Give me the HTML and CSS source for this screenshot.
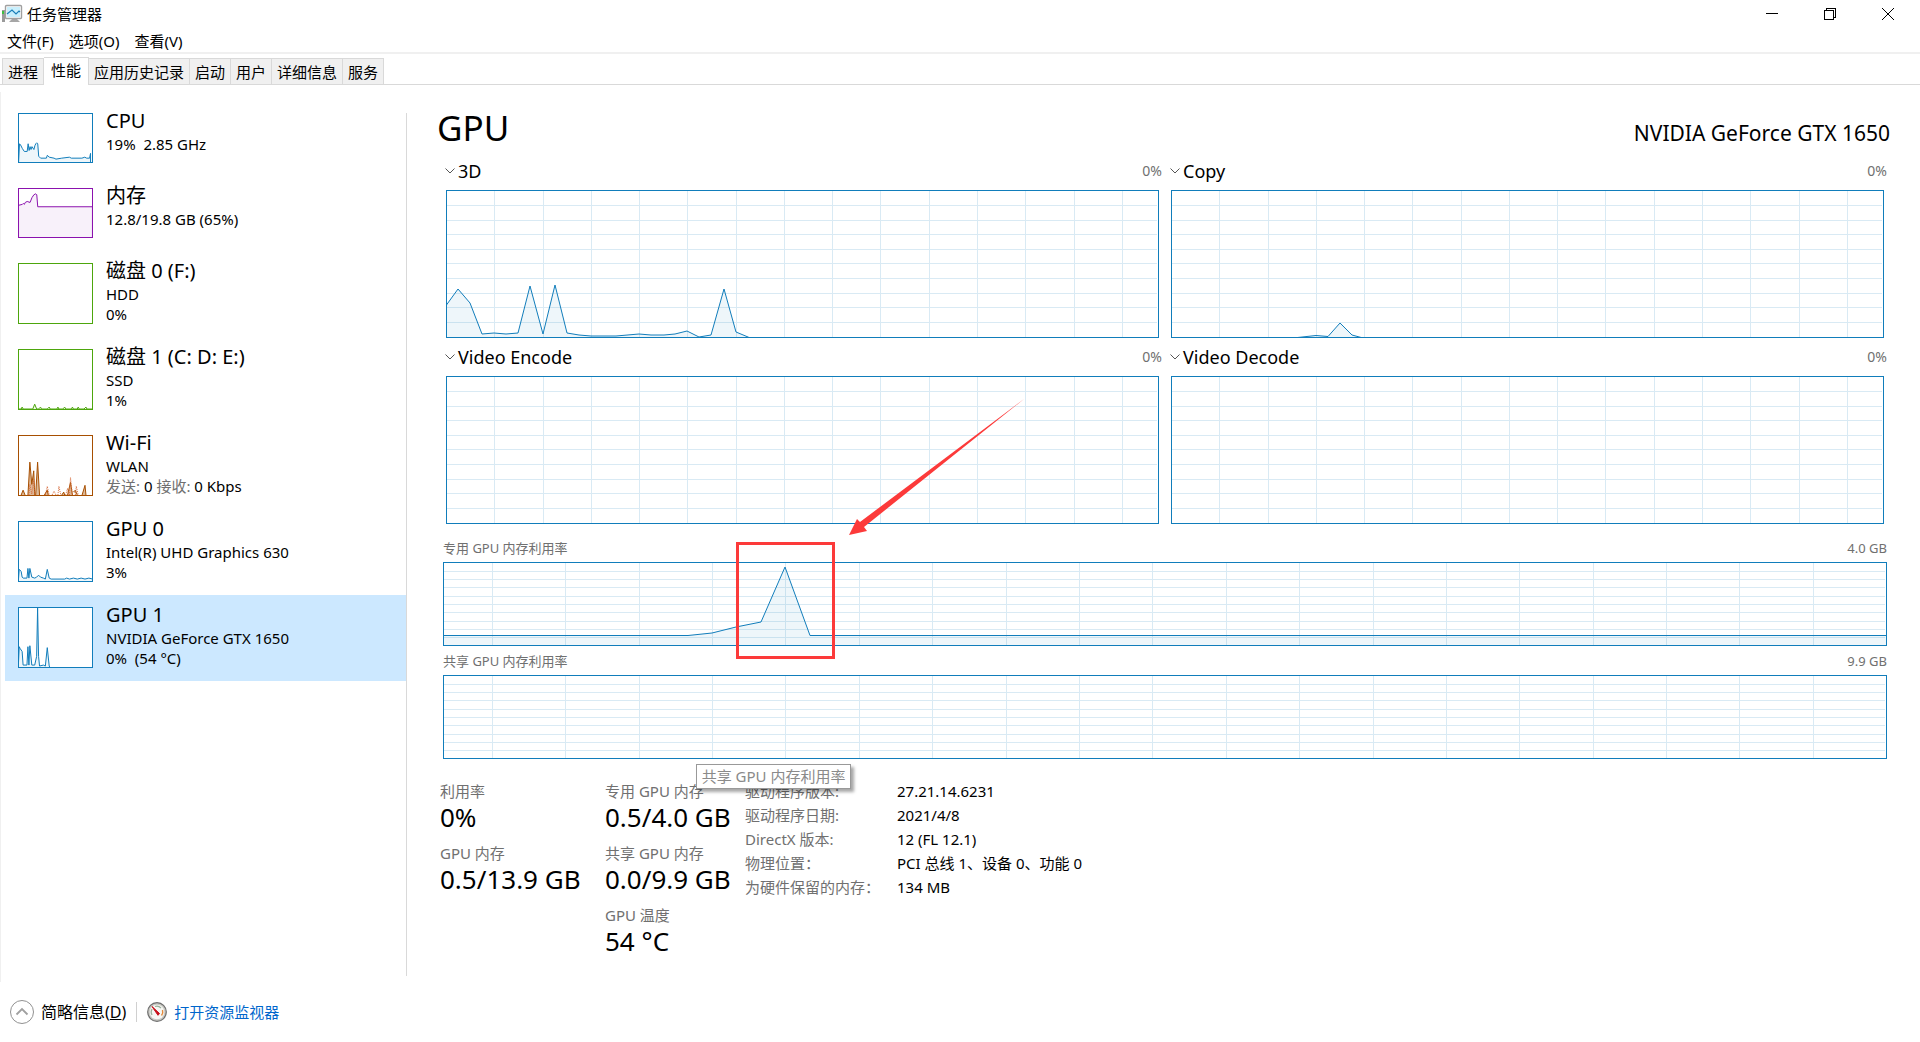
FILE: index.html
```html
<!DOCTYPE html>
<html lang="zh-CN">
<head>
<meta charset="utf-8">
<title>任务管理器</title>
<meta name="viewport" content="width=device-width, initial-scale=1">
<link rel="stylesheet" href="styles.css">
</head>
<body>
<svg class="defs" width="0" height="0" aria-hidden="true">
  <defs>
    <path id="grid-engine" class="grid" vector-effect="non-scaling-stroke" d="M48.5 0V148M97.5 0V148M145.5 0V148M193.5 0V148M241.5 0V148M290.5 0V148M338.5 0V148M386.5 0V148M434.5 0V148M483.5 0V148M531.5 0V148M579.5 0V148M628.5 0V148M676.5 0V148M0 15.5H711M0 30.5H711M0 44.5H711M0 59.5H711M0 73.5H711M0 88.5H711M0 103.5H711M0 117.5H711M0 132.5H711"/>
    <path id="grid-memory" class="grid" vector-effect="non-scaling-stroke" d="M49.5 0V85M122.5 0V85M196.5 0V85M269.5 0V85M342.5 0V85M416.5 0V85M489.5 0V85M563.5 0V85M636.5 0V85M709.5 0V85M783.5 0V85M856.5 0V85M930.5 0V85M1003.5 0V85M1076.5 0V85M1150.5 0V85M1223.5 0V85M1296.5 0V85M1370.5 0V85M0 9.5H1442M0 17.5H1442M0 25.5H1442M0 34.5H1442M0 42.5H1442M0 50.5H1442M0 59.5H1442M0 67.5H1442M0 75.5H1442"/>
  </defs>
</svg>

<header class="titlebar">
  <svg class="app-icon" width="22" height="20" viewBox="0 0 22 20" aria-hidden="true">
    <rect x="1" y="6" width="3" height="12" fill="#9a9a9a"/><rect x="1" y="7" width="2" height="3" fill="#3fbf3f"/>
    <path d="M8 18l3-3h5l3 3z" fill="#a6a6a6"/>
    <rect x="4.500" y="1.500" width="16" height="13" rx="1" fill="#fff" stroke="#a0a0a0" stroke-width="1.400"/>
    <rect x="6" y="3" width="13" height="10" fill="#c9effc"/>
    <path d="M6 10l5-4 4 4 3-3 1 1" fill="none" stroke="#1b7fb8" stroke-width="1.200"/>
  </svg>
  <h1 class="app-title">任务管理器</h1>
  <div class="window-buttons">
    <button aria-label="最小化"><svg width="12" height="12" viewBox="0 0 12 12"><path d="M0 5.500h12"/></svg></button>
    <button aria-label="还原"><svg width="12" height="12" viewBox="0 0 12 12"><path d="M.5 2.500h9v9h-9zM2.500 2.500v-2h9v9h-2"/></svg></button>
    <button aria-label="关闭"><svg class="smooth" width="12" height="12" viewBox="0 0 12 12"><path d="M0 0l12 12M12 0L0 12"/></svg></button>
  </div>
</header>

<nav class="menubar">
  <button>文件(F)</button><button>选项(O)</button><button>查看(V)</button>
</nav>

<div class="tabs" role="tablist">
  <button role="tab">进程</button>
  <button role="tab" class="active" aria-selected="true">性能</button>
  <button role="tab">应用历史记录</button>
  <button role="tab">启动</button>
  <button role="tab">用户</button>
  <button role="tab">详细信息</button>
  <button role="tab">服务</button>
</div>

<div class="pane">
  <aside class="sidebar">
    <button class="resource">
      <svg class="thumb short blue" viewBox="0 0 75 50"><path class="area" d="M0 31L1 32 3 36 5 39H8L9 31 10 38 11 34 12 37 13 34 15 37 16 33 17 31 18 30 19 31 20 44 22 46H28L29 43 31 45 36 46 38 47 44 46 52 45 54 46H65L68 45 70 46H73L74 41V51H-1z"/></svg>
      <span class="info"><strong>CPU</strong><span>19%&nbsp; 2.85 GHz</span></span>
    </button>
    <button class="resource">
      <svg class="thumb short purple" viewBox="0 0 75 50"><path class="area" d="M-1 17L3 16 4 15 5 16 6 14 8 13 11 14 13 9 15 6 17 5 18 6 19 18.500H76V51H-1z"/></svg>
      <span class="info"><strong>内存</strong><span>12.8/19.8 GB (65%)</span></span>
    </button>
    <button class="resource">
      <svg class="thumb green" viewBox="0 0 75 61"></svg>
      <span class="info"><strong>磁盘 0 (F:)</strong><span>HDD</span><span>0%</span></span>
    </button>
    <button class="resource">
      <svg class="thumb green" viewBox="0 0 75 61"><path class="area" d="M-1 61H2L3 59 4 61H14L16 56 18 61H20L22 59 23 61H29L31 59 32 61H39L40 59 41 61H45L47 59 48 61H54L55 59 56 61H60L61 59 62 61H67L69 59 70 61H76V62H-1z"/></svg>
      <span class="info"><strong>磁盘 1 (C: D: E:)</strong><span>SSD</span><span>1%</span></span>
    </button>
    <button class="resource">
      <svg class="thumb brown" viewBox="0 0 75 61"><path class="area" d="M2 61L4 56 6 61M9 61L11 27 13 50 15 36 16 61M17 61L19 27 21 61M26 61L29 56 30 61M44 61L46 58 47 61M50 61L53 48 55 61M56 58L58 56 60 61M65 61L68 51 69 61"/><path class="dots" d="M10 61L11 50 13 60 15 45 16 61M27 61L29 52 31 61M34 61L36 57 38 61M40 61L41 52 43 61M48 61L50 54 51 61M52 61L53 43 55 61M58 61L59 52 61 61"/></svg>
      <span class="info"><strong>Wi-Fi</strong><span>WLAN</span><span><em>发送:</em> 0 <em>接收:</em> 0 Kbps</span></span>
    </button>
    <button class="resource">
      <svg class="thumb blue" viewBox="0 0 75 61"><path class="area" d="M0 49L2 51 3 57 4 58H8L9 48 10 58 11 48 13 57 16 58 18 57 20 55 22 57 25 58 27 59 29 49 31 58 33 59H47L49 58 52 59 56 58 60 59 64 58 68 59 72 58 76 59V62H-1z"/></svg>
      <span class="info"><strong>GPU 0</strong><span>Intel(R) UHD Graphics 630</span><span>3%</span></span>
    </button>
    <button class="resource selected" aria-current="true">
      <svg class="thumb blue" viewBox="0 0 75 61"><path class="area" d="M0 40L1 42 3 45 4 59H8L9 40 10 59 11 39 13 59 16 59 18 50 19 0 20 50 21 60 25 59 27 60 29 41 31 60 32 62H-1z"/></svg>
      <span class="info"><strong>GPU 1</strong><span>NVIDIA GeForce GTX 1650</span><span>0%&nbsp; (54 °C)</span></span>
    </button>
  </aside>
  <div class="divider"></div>

  <main class="detail">
    <header class="detail-head"><h2>GPU</h2><p>NVIDIA GeForce GTX 1650</p></header>

    <div class="charts">
      <div class="engines">
        <section>
          <div class="engine-head"><button><svg width="10" height="6" viewBox="0 0 10 6"><path d="M.5.5L5 5 9.500.5"/></svg>3D</button><span>0%</span></div>
          <svg class="chart" viewBox="1 1 711 146" preserveAspectRatio="none"><use href="#grid-engine"/><path class="area" d="M-1 117L12 99 24 113 36 144 48 143 60 144 72 143 84 96 97 144 109 95 121 143 133 145 145 146H170L193 144 205 145H218L229 144 241 141 253 147 265 145 278 99 290 142 302 147 306 149H-1z"/></svg>
        </section>
        <section>
          <div class="engine-head"><button><svg width="10" height="6" viewBox="0 0 10 6"><path d="M.5.5L5 5 9.500.5"/></svg>Copy</button><span>0%</span></div>
          <svg class="chart" viewBox="1 1 711 146" preserveAspectRatio="none"><use href="#grid-engine"/><path class="area" d="M122 148L145 145.500 157 146.500 169 133 181 145 192 148z"/></svg>
        </section>
        <section>
          <div class="engine-head"><button><svg width="10" height="6" viewBox="0 0 10 6"><path d="M.5.5L5 5 9.500.5"/></svg>Video Encode</button><span>0%</span></div>
          <svg class="chart" viewBox="1 1 711 146" preserveAspectRatio="none"><use href="#grid-engine"/></svg>
        </section>
        <section>
          <div class="engine-head"><button><svg width="10" height="6" viewBox="0 0 10 6"><path d="M.5.5L5 5 9.500.5"/></svg>Video Decode</button><span>0%</span></div>
          <svg class="chart" viewBox="1 1 711 146" preserveAspectRatio="none"><use href="#grid-engine"/></svg>
        </section>
      </div>

      <section class="memory dedicated">
        <div class="memory-head"><span>专用 GPU 内存利用率</span><span>4.0 GB</span></div>
        <svg class="chart" viewBox="1 1 1442 82" preserveAspectRatio="none"><use href="#grid-memory"/><path class="area" d="M-1 73.500H245L269 71 293 65 318 60 342 5 367 73.500H1446V87H-1z"/></svg>
        <div class="highlight"></div>
        <svg class="arrow" width="176" height="138" viewBox="0 0 176 138" aria-hidden="true"><path d="M0 137L8 121 11 124 175 1 15 129 18 133z"/></svg>
      </section>
      <section class="memory">
        <div class="memory-head"><span>共享 GPU 内存利用率</span><span>9.9 GB</span></div>
        <svg class="chart" viewBox="1 1 1442 82" preserveAspectRatio="none"><use href="#grid-memory"/></svg>
        <div class="tooltip" role="tooltip">共享 GPU 内存利用率</div>
      </section>
    </div>

    <div class="stats">
      <dl class="figures">
        <div><dt>利用率</dt><dd>0%</dd></div>
        <div><dt>GPU 内存</dt><dd>0.5/13.9 GB</dd></div>
      </dl>
      <dl class="figures">
        <div><dt>专用 GPU 内存</dt><dd>0.5/4.0 GB</dd></div>
        <div><dt>共享 GPU 内存</dt><dd>0.0/9.9 GB</dd></div>
        <div><dt>GPU 温度</dt><dd>54 °C</dd></div>
      </dl>
      <table class="facts">
        <tr><th scope="row">驱动程序版本:</th><td>27.21.14.6231</td></tr>
        <tr><th scope="row">驱动程序日期:</th><td>2021/4/8</td></tr>
        <tr><th scope="row">DirectX 版本:</th><td>12 (FL 12.1)</td></tr>
        <tr><th scope="row">物理位置：</th><td>PCI 总线 1、设备 0、功能 0</td></tr>
        <tr><th scope="row">为硬件保留的内存：</th><td>134 MB</td></tr>
      </table>
    </div>
  </main>
</div>

<footer class="bottombar">
  <button class="fewer">
    <svg width="24" height="24" viewBox="0 0 24 24" aria-hidden="true"><circle cx="12" cy="12" r="11.500" fill="#fff" stroke="#919191"/><path d="M6.500 14.500L12 9l5.500 5.500" fill="none" stroke="#a0a0a0" stroke-width="1.800"/></svg>
    <span>简略信息(<u>D</u>)</span>
  </button>
  <a class="monitor" href="#">
    <svg width="20" height="20" viewBox="0 0 20 20" aria-hidden="true"><circle cx="10" cy="10" r="9.300" fill="#c9c9c4" stroke="#6d6d6d" stroke-width="1.200"/><circle cx="10" cy="10" r="7.300" fill="#f7f7f4"/><path d="M5 13a6 6 0 0 1 0-6M8 4.500a6 6 0 0 1 6 1.500" fill="none" stroke="#9ab09a" stroke-width="1.200"/><path d="M15.500 8a6 6 0 0 1-1 5.500" fill="none" stroke="#e58a3c" stroke-width="1.400"/><path d="M5 4.500l7.500 7-1.500 1.800z" fill="#c8101a" stroke="#c8101a"/></svg>
    <span>打开资源监视器</span>
  </a>
</footer>
</body>
</html>
```
FILE: styles.css
```css
* { box-sizing: border-box; }

body {
  margin: 0;
  min-height: 100vh;
  display: flex;
  flex-direction: column;
  background: #fff;
  color: #000;
  font: 15px/20px "Noto Sans", "Noto Sans CJK SC", sans-serif;
}

button {
  margin: 0;
  padding: 0;
  border: 0;
  background: none;
  color: inherit;
  font: inherit;
  text-align: left;
}

h1, h2, p, dl, dd { margin: 0; font-weight: 400; }
.defs { position: absolute; }

/* Window frame */
.titlebar { display: flex; align-items: center; height: 28px; padding-left: 1px; }
.app-icon { margin-right: 4px; }
.app-title { font-size: 15px; }
.window-buttons { display: flex; margin-left: auto; padding-right: 3px; }
.window-buttons button { display: grid; place-items: center; width: 58px; height: 28px; }
.window-buttons path { fill: none; stroke: #000; shape-rendering: crispEdges; }
.window-buttons .smooth path { shape-rendering: auto; }

.menubar { display: flex; align-items: flex-start; height: 26px; padding-top: 3px; border-bottom: 2px solid #f0f0f0; }
.menubar button { padding: 0 8px 0 7px; }

.tabs { display: flex; align-items: flex-end; height: 31px; padding-left: 2px; border-bottom: 1px solid #d9d9d9; }
.tabs button { height: 26px; padding: 0 5px; border: 1px solid #d9d9d9; border-width: 1px 1px 0 0; background: #f0f0f0; }
.tabs button:first-child { border-left-width: 1px; }
.tabs .active { height: 28px; margin-bottom: -1px; padding: 0 7px 4px; background: #fff; }

.pane { display: flex; flex: 1; margin-top: 7px; border-left: 1px solid #f0f0f0; }

/* Resource list */
.sidebar { width: 405px; flex: none; padding: 9px 0 0 4px; }
.resource { display: flex; width: 100%; padding: 12px 0 13px 13px; gap: 13px; }
.resource.selected { background: #cce8ff; }
.thumb { width: 75px; height: 61px; flex: none; background: #fff; border: 1px solid currentColor; }
.thumb.short { height: 50px; }
.blue { color: #117dbb; }
.purple { color: #8b12ae; }
.green { color: #4da60c; }
.brown { color: #a74f01; }
.area { fill: #117dbb; fill-opacity: 0.07; stroke: #117dbb; vector-effect: non-scaling-stroke; }
.thumb .area { fill: currentColor; stroke: currentColor; }
.purple .area { fill: #8b12ae; fill-opacity: 0.06; }
.brown .area { fill-opacity: 0.4; }
.dots { fill: none; stroke: #d66a3a; stroke-dasharray: 1 1; }
.info { display: flex; flex-direction: column; margin-top: -5px; }
.info strong { font-size: 20px; line-height: 26px; font-weight: 400; }
.info em { font-style: normal; color: #707070; }
.divider { width: 1px; flex: none; margin: 21px 0 6px; background: #d9d9d9; }

/* Detail view */
.detail { flex: 1; min-width: 0; padding: 0 30px; }
.detail-head { display: flex; align-items: baseline; justify-content: space-between; height: 60px; padding-top: 12px; }
.detail-head h2 { font-size: 35px; line-height: 48px; }
.detail-head p { font-size: 21px; }
.charts { padding: 0 3px 0 6px; }
.chart { display: block; width: 100%; border: 1px solid #117dbb; background: #fff; }
.grid { fill: none; stroke: #d9eaf4; shape-rendering: crispEdges; }

.engines { display: grid; grid-template-columns: 1fr 1fr; column-gap: 6px; }
.engine-head { display: flex; align-items: center; justify-content: space-between; height: 38px; padding-left: 2px; }
.engine-head button { display: flex; align-items: center; gap: 3px; font-size: 18px; }
.engine-head path { fill: none; stroke: #555; }
.engine-head span { font-size: 14px; color: #707070; }
.engines .chart { width: calc(100% - 6px); height: 148px; margin: 0 3px; }

.memory { position: relative; }
.dedicated { margin-top: 9px; }
.memory-head { display: flex; align-items: center; justify-content: space-between; height: 29px; font-size: 13px; color: #707070; }
.memory .chart { height: 84px; }

.highlight { position: absolute; left: 20.3%; top: 9px; width: 99px; height: 117px; border: 3px solid #fc3a3a; }
.arrow { position: absolute; left: 28.1%; top: -135px; fill: #fc3a3a; }
.tooltip {
  position: absolute;
  left: 17.5%;
  top: 118px;
  height: 25px;
  padding: 0 5px;
  border: 1px solid #999;
  background: #fff;
  color: #8a8a8a;
  line-height: 23px;
  box-shadow: 3px 3px 3px rgba(0, 0, 0, 0.35);
  white-space: nowrap;
}

.stats { display: flex; padding: 22px 0 0 3px; }
.figures { display: flex; flex-direction: column; gap: 10px; width: 165px; }
.figures + .figures { width: 140px; }
.figures dt { color: #707070; }
.figures dd { font-size: 26px; line-height: 32px; white-space: nowrap; }
.facts { align-self: flex-start; border-collapse: collapse; }
.facts th, .facts td { height: 24px; padding: 0 0 4px; line-height: 20px; font-weight: 400; text-align: left; }
.facts th { width: 152px; color: #707070; }

/* Bottom bar */
.bottombar { display: flex; align-items: center; height: 60px; padding-left: 10px; }
.fewer { display: flex; align-items: center; gap: 7px; padding-right: 10px; font-size: 16px; }
.monitor { display: flex; align-items: center; gap: 7px; padding-left: 10px; border-left: 1px solid #d0d0d0; color: #0066cc; text-decoration: none; }
```
